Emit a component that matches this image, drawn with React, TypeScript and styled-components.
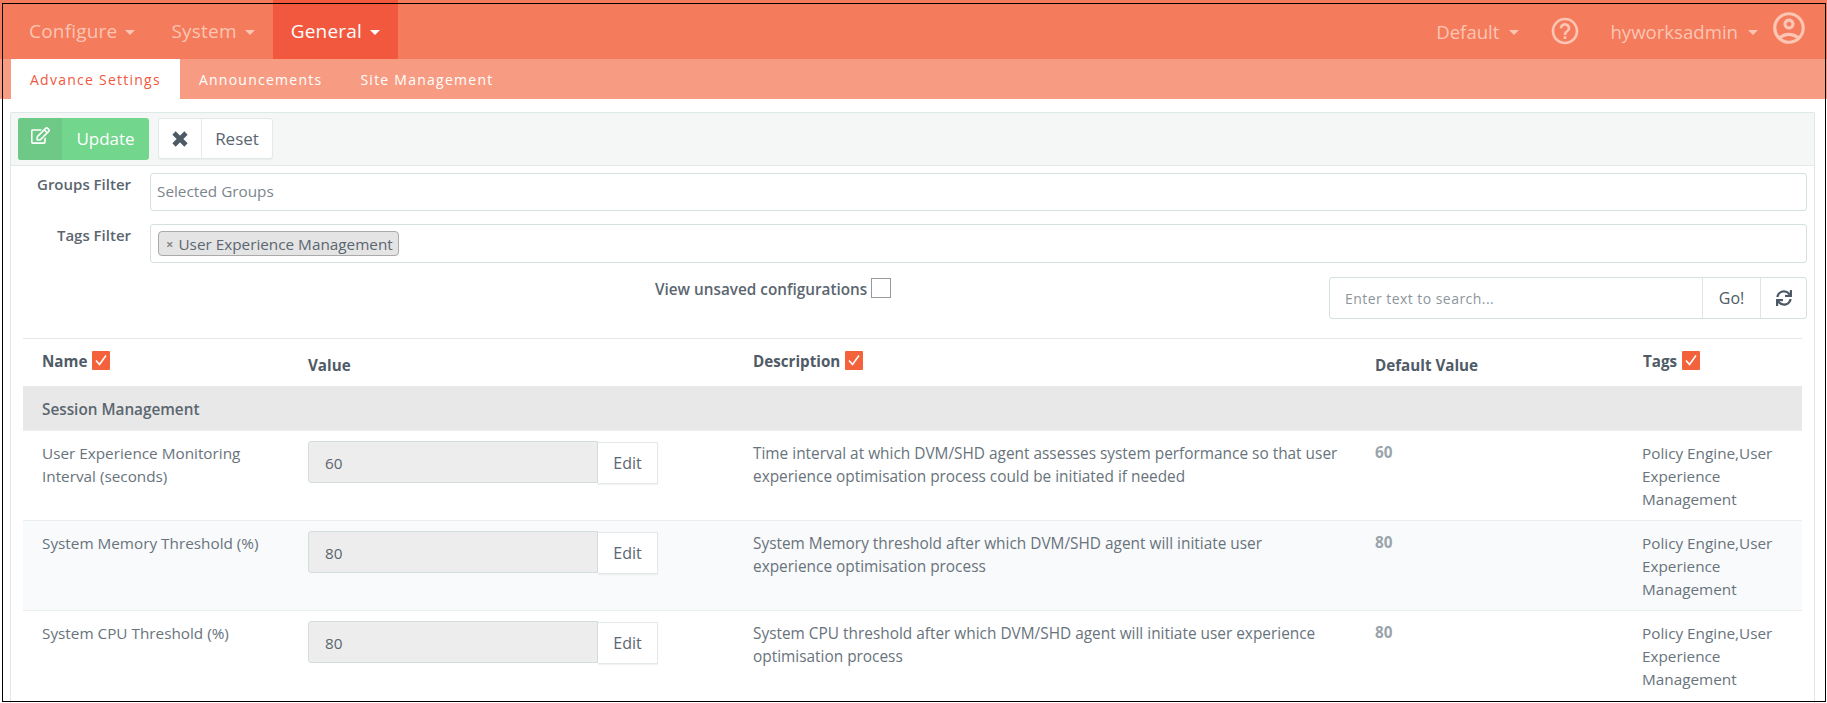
import React from "react";
import styled, { createGlobalStyle } from "styled-components";
import { FaRegEdit, FaSync } from "react-icons/fa";
import { MdHelpOutline, MdOutlineAccountCircle } from "react-icons/md";

const Global = createGlobalStyle`
  html, body { margin: 0; padding: 0; height: 703px; overflow: hidden; background: #fff; }
  body { font-family: "Open Sans", "Noto Sans", sans-serif; font-size: 15.3px; color: #5b6670; }
  * { box-sizing: border-box; }
`;

const Page = styled.div`
  position: relative;
  width: 1827px;
  height: 703px;
  overflow: hidden;
`;

const Frame = styled.div`
  position: absolute;
  left: 2px;
  top: 3px;
  right: 1px;
  bottom: 1px;
  border: 1px solid #000;
  pointer-events: none;
  z-index: 5;
`;

const NavBar = styled.nav`
  height: 59px;
  background: #f47b5b;
  display: flex;
  align-items: stretch;
  padding-left: 11px;
`;

const NavItem = styled.div<{ $active?: boolean }>`
  display: flex;
  align-items: center;
  gap: 8px;
  padding: 3px 18px 0;
  font-size: 19px;
  letter-spacing: 0.2px;
  color: ${(p) => (p.$active ? "#fff" : "#fcc5b4")};
  background: ${(p) => (p.$active ? "#f1583e" : "transparent")};
`;

const Caret = styled.span`
  width: 0;
  height: 0;
  border-left: 5px solid transparent;
  border-right: 5px solid transparent;
  border-top: 5px solid currentColor;
  margin-top: 3px;
`;

const NavRight = styled.div`
  margin-left: auto;
  display: flex;
  align-items: center;
  color: #fcc5b4;
  font-size: 18.6px;
  padding: 3px 19px 0 0;
`;

const NavText = styled.span`
  display: flex;
  align-items: center;
  gap: 10px;
`;

const HelpIcon = styled(MdHelpOutline)`
  font-size: 32px;
  margin: 0 29px 0 30px;
`;

const UserIcon = styled(MdOutlineAccountCircle)`
  font-size: 38px;
  margin-left: 12px;
  margin-top: -6px;
`;

const SubNav = styled.div`
  height: 40px;
  background: #f79c82;
  display: flex;
  padding-left: 11px;
`;

const Tab = styled.div<{ $active?: boolean }>`
  height: 40px;
  display: flex;
  align-items: center;
  padding: 0 19px;
  font-size: 14px;
  letter-spacing: 1.25px;
  color: ${(p) => (p.$active ? "#f1583e" : "#fff")};
  background: ${(p) => (p.$active ? "#fff" : "transparent")};
`;

const Panel = styled.section`
  margin: 13px 12px 0 10px;
  height: 600px;
  border: 1px solid #dfe8e8;
  border-bottom: 0;
  border-radius: 2px 2px 0 0;
`;

const Toolbar = styled.div`
  height: 53px;
  background: #f5f7f6;
  border-bottom: 1px solid #e4eaea;
  display: flex;
  align-items: center;
  padding: 0 0 1px 7px;
  gap: 9px;
`;

const UpdateButton = styled.div`
  width: 131px;
  height: 42px;
  border-radius: 3px;
  background: #72d68c;
  color: #fff;
  font-size: 17px;
  display: flex;
  align-items: stretch;
  overflow: hidden;
`;

const UpdateIcon = styled.span`
  width: 44px;
  background: #6dc985;
  display: flex;
  justify-content: center;
  padding-top: 8px;
  font-size: 19px;
`;

const UpdateLabel = styled.span`
  flex: 1;
  display: flex;
  align-items: center;
  justify-content: center;
`;

const ResetButton = styled.div`
  width: 115px;
  height: 41px;
  border: 1px solid #e3e8e8;
  border-radius: 3px;
  background: #fff;
  color: #5b6670;
  font-size: 17px;
  display: flex;
  align-items: stretch;
  box-shadow: 0 1px 1px rgba(0, 0, 0, 0.04);
`;

const ResetIcon = styled.span`
  width: 43px;
  border-right: 1px solid #e3e8e8;
  display: flex;
  align-items: center;
  justify-content: center;
  color: #4d5a66;
`;

const ResetLabel = styled.span`
  flex: 1;
  display: flex;
  align-items: center;
  justify-content: center;
`;

const FormRow = styled.div<{ $top: number; $height: number }>`
  display: grid;
  grid-template-columns: 120px 1fr;
  column-gap: 18px;
  margin-top: ${(p) => p.$top}px;
  height: ${(p) => p.$height}px;
  padding-right: 7px;
`;

const FormLabel = styled.label`
  text-align: right;
  font-weight: 600;
  font-size: 15px;
  line-height: 23px;
  color: #5b6670;
`;

const FieldBox = styled.div`
  margin-left: 1px;
  border: 1px solid #d5e0e0;
  border-radius: 3px;
  background: #fff;
  display: flex;
  align-items: center;
  padding: 0 6px 2px;
  color: #7b858d;
`;

const Chip = styled.span`
  display: inline-flex;
  align-items: center;
  height: 25px;
  width: 241px;
  margin: 2px 0 0 1px;
  padding: 0 5px 0 7px;
  gap: 5px;
  background: #e4e4e4;
  border: 1px solid #aaa;
  border-radius: 4px;
  color: #5b6670;
  white-space: nowrap;
`;

const ChipX = styled.span`
  color: #888;
  font-weight: 700;
  font-size: 13px;
`;

const ControlRow = styled.div`
  display: flex;
  justify-content: space-between;
  align-items: flex-start;
  margin-top: 14px;
  padding: 0 7px 0 644px;
`;

const Unsaved = styled.div`
  display: flex;
  align-items: center;
  gap: 4px;
  font-weight: 600;
  height: 21px;
  margin-top: 1px;
`;

const EmptyBox = styled.span`
  width: 20px;
  height: 20px;
  border: 1px solid #999;
  background: #fff;
  margin-top: -2px;
`;

const SearchGroup = styled.div`
  width: 478px;
  height: 42px;
  display: flex;
  border: 1px solid #d5e0e0;
  border-radius: 3px;
  background: #fff;
`;

const SearchText = styled.div`
  flex: 1;
  padding: 0 15px;
  display: flex;
  align-items: center;
  color: #8d969d;
  font-size: 14px;
  letter-spacing: 0.45px;
`;

const SearchButton = styled.div<{ $width: number }>`
  width: ${(p) => p.$width}px;
  border-left: 1px solid #dfe6e6;
  display: flex;
  align-items: center;
  justify-content: center;
  font-size: 16px;
  color: #4d5a66;
`;

const Table = styled.table`
  width: 1779px;
  margin: 19px 0 0 12px;
  border-collapse: collapse;
  table-layout: fixed;
  border-top: 1px solid #e3e8e8;
`;

const Th = styled.th<{ $top: number }>`
  height: 47px;
  padding: ${(p) => p.$top}px 19px 0;
  text-align: left;
  vertical-align: top;
  font-weight: 700;
  font-size: 15.2px;
  line-height: 23px;
  color: #4f5b66;
`;

const HeadLabel = styled.span`
  display: inline-flex;
  align-items: center;
  gap: 5px;
`;

const CheckMark = styled.span`
  width: 18px;
  height: 19px;
  margin-top: -3px;
  background: #f4623c;
  border-radius: 1px;
  display: inline-flex;
  align-items: center;
  justify-content: center;
`;

const GroupRow = styled.tr`
  background: #e8e8e8;
`;

const GroupCell = styled.td`
  height: 45px;
  padding: 2px 19px 0;
  font-weight: 600;
  color: #5b6670;
`;

const Row = styled.tr<{ $alt?: boolean }>`
  height: 90px;
  background: ${(p) => (p.$alt ? "#f9fafb" : "#fff")};
  border-top: 1px solid #eaeeee;
`;

const Td = styled.td`
  padding: 11px 19px 0;
  vertical-align: top;
  line-height: 23.2px;
  color: #68737c;
`;

const TagsCell = styled(Td)`
  padding-left: 18px;
`;

const ValueCell = styled.td`
  padding: 10px 19px 0;
  vertical-align: top;
`;

const DefaultCell = styled(Td)`
  padding-top: 10px;
  font-weight: 700;
  color: #9aa4ab;
`;

const ValueGroup = styled.div`
  display: flex;
  width: 350px;
`;

const ValueBox = styled.div`
  width: 290px;
  height: 42px;
  background: #ededed;
  border: 1px solid #d3dddd;
  border-radius: 3px 0 0 3px;
  display: flex;
  align-items: center;
  padding: 1px 0 0 16px;
  color: #5b6670;
`;

const EditButton = styled.div`
  width: 60px;
  height: 42px;
  margin-top: 1px;
  background: #fff;
  border: 1px solid #e3e8e8;
  border-left: 0;
  display: flex;
  align-items: center;
  justify-content: center;
  font-size: 16px;
  color: #5b6670;
  box-shadow: 0 1px 1px rgba(0, 0, 0, 0.05);
`;

const DescLine = styled.span`
  display: block;
  white-space: nowrap;
  font-size: 15.4px;
`;

const Check = () => (
  <CheckMark>
    <svg width="14" height="14" viewBox="0 0 14 14" fill="none" stroke="#fff" strokeWidth="1.6">
      <path d="M2 7.5 L5.5 11.5 L12 2.5" />
    </svg>
  </CheckMark>
);

const CrossIcon = () => (
  <svg width="16" height="16" viewBox="0 0 16 16" fill="none" stroke="currentColor" strokeWidth="4.6">
    <path d="M2 2 L14 14 M14 2 L2 14" />
  </svg>
);

const tags = "Policy Engine,User Experience Management";

const rows = [
  {
    name: "User Experience Monitoring Interval (seconds)",
    value: "60",
    desc: [
      "Time interval at which DVM/SHD agent assesses system performance so that user",
      "experience optimisation process could be initiated if needed",
    ],
  },
  {
    name: "System Memory Threshold (%)",
    value: "80",
    desc: [
      "System Memory threshold after which DVM/SHD agent will initiate user",
      "experience optimisation process",
    ],
  },
  {
    name: "System CPU Threshold (%)",
    value: "80",
    desc: [
      "System CPU threshold after which DVM/SHD agent will initiate user experience",
      "optimisation process",
    ],
  },
];

export default function App() {
  return (
    <Page>
      <Global />
      <Frame />
      <NavBar>
        <NavItem>Configure <Caret /></NavItem>
        <NavItem>System <Caret /></NavItem>
        <NavItem $active>General <Caret /></NavItem>
        <NavRight>
          <NavText>Default <Caret /></NavText>
          <HelpIcon />
          <NavText>hyworksadmin <Caret /></NavText>
          <UserIcon />
        </NavRight>
      </NavBar>
      <SubNav>
        <Tab $active>Advance Settings</Tab>
        <Tab>Announcements</Tab>
        <Tab>Site Management</Tab>
      </SubNav>
      <Panel>
        <Toolbar>
          <UpdateButton>
            <UpdateIcon><FaRegEdit /></UpdateIcon>
            <UpdateLabel>Update</UpdateLabel>
          </UpdateButton>
          <ResetButton>
            <ResetIcon><CrossIcon /></ResetIcon>
            <ResetLabel>Reset</ResetLabel>
          </ResetButton>
        </Toolbar>
        <FormRow $top={7} $height={38}>
          <FormLabel>Groups Filter</FormLabel>
          <FieldBox>Selected Groups</FieldBox>
        </FormRow>
        <FormRow $top={13} $height={39}>
          <FormLabel>Tags Filter</FormLabel>
          <FieldBox>
            <Chip><ChipX>×</ChipX>User Experience Management</Chip>
          </FieldBox>
        </FormRow>
        <ControlRow>
          <Unsaved>View unsaved configurations <EmptyBox /></Unsaved>
          <SearchGroup>
            <SearchText>Enter text to search...</SearchText>
            <SearchButton $width={58}>Go!</SearchButton>
            <SearchButton $width={46}><FaSync /></SearchButton>
          </SearchGroup>
        </ControlRow>
        <Table>
          <colgroup>
            <col width={266} />
            <col width={445} />
            <col width={622} />
            <col width={268} />
            <col width={178} />
          </colgroup>
          <thead>
            <tr>
              <Th $top={11}><HeadLabel>Name <Check /></HeadLabel></Th>
              <Th $top={15}>Value</Th>
              <Th $top={11}><HeadLabel>Description <Check /></HeadLabel></Th>
              <Th $top={15}>Default Value</Th>
              <Th $top={11}><HeadLabel>Tags <Check /></HeadLabel></Th>
            </tr>
          </thead>
          <tbody>
            <GroupRow>
              <GroupCell colSpan={5}>Session Management</GroupCell>
            </GroupRow>
            {rows.map((r, i) => (
              <Row key={r.name} $alt={i === 1}>
                <Td>{r.name}</Td>
                <ValueCell>
                  <ValueGroup>
                    <ValueBox>{r.value}</ValueBox>
                    <EditButton>Edit</EditButton>
                  </ValueGroup>
                </ValueCell>
                <Td>
                  {r.desc.map((line) => (
                    <DescLine key={line}>{line}</DescLine>
                  ))}
                </Td>
                <DefaultCell>{r.value}</DefaultCell>
                <TagsCell>{tags}</TagsCell>
              </Row>
            ))}
          </tbody>
        </Table>
      </Panel>
    </Page>
  );
}
